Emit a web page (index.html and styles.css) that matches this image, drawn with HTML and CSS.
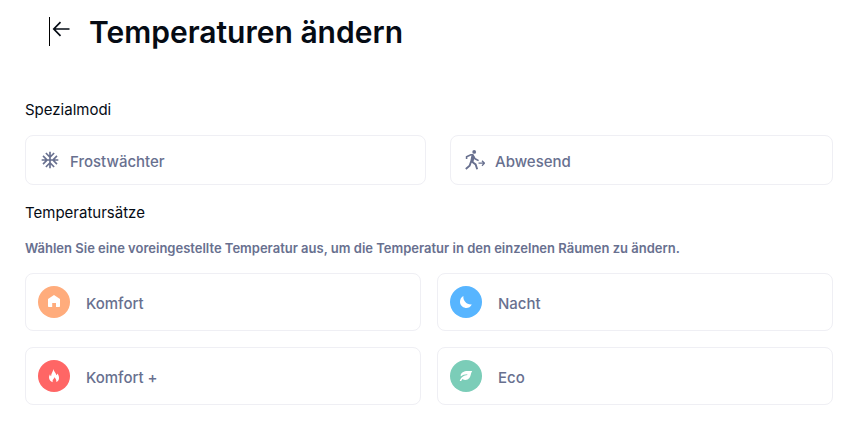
FILE: index.html
```html
<!DOCTYPE html>
<html lang="de">
<head>
  <meta charset="utf-8">
  <meta name="viewport" content="width=device-width, initial-scale=1">
  <title>Temperaturen ändern</title>
  <link rel="stylesheet" href="styles.css">
</head>
<body>
  <header class="page-header">
    <a class="back" href="#" aria-label="Zurück">
      <svg width="18" height="16" viewBox="0 0 18 16" fill="none" stroke="currentColor" stroke-width="1.7">
        <path d="M17.5 8H2M8.5 1.2 1.8 8l6.7 6.8"/>
      </svg>
    </a>
    <h1>Temperaturen ändern</h1>
  </header>

  <main>
    <h2>Spezialmodi</h2>
    <div class="modes">
      <button type="button" class="card mode">
        <svg width="20" height="20" viewBox="0 0 24 24" fill="currentColor">
          <path d="M22 11h-4.170l3.240-3.240-1.410-1.420L15 11h-2V9l4.660-4.660-1.420-1.410L13 6.170V2h-2v4.170L7.760 2.930 6.340 4.340 11 9v2H9L4.340 6.340 2.930 7.760 6.170 11H2v2h4.170l-3.240 3.240 1.410 1.420L9 13h2v2l-4.660 4.660 1.420 1.410L11 17.830V22h2v-4.170l3.240 3.240 1.420-1.410L13 15v-2h2l4.660 4.660 1.410-1.420L17.830 13H22z"/>
        </svg>
        <span class="label">Frostwächter</span>
      </button>
      <button type="button" class="card mode">
        <svg width="20" height="20" viewBox="0 0 20 20" fill="none" stroke="currentColor" stroke-width="1.6">
          <circle cx="9.2" cy="1.9" r="1.9" fill="currentColor" stroke="none"/>
          <path d="M1.600 9V6.800l4.200-2h2l2.300 4 3.500 1.800"/>
          <path d="M7.500 5 6.300 11.200l4.300 3.200 1.600 4.800M8.600 6.500l-1 5M6 11.800l-1.400 4L.8 19" stroke-width="1.900"/>
          <path d="M13.500 13.200h5.800M17 10.700l2.500 2.500-2.500 2.500" stroke-width="1.300"/>
        </svg>
        <span class="label">Abwesend</span>
      </button>
    </div>

    <h2>Temperatursätze</h2>
    <p class="hint">Wählen Sie eine voreingestellte Temperatur aus, um die Temperatur in den einzelnen Räumen zu ändern.</p>
    <div class="presets">
      <button type="button" class="card preset">
        <span class="badge comfort">
          <svg width="16" height="16" viewBox="0 0 16 16" fill="currentColor">
            <path d="M8 1 14 5v7.200q0 .8-.8.8H10V9H6.200v4H2.800Q2 13 2 12.200V5z"/>
          </svg>
        </span>
        <span class="label">Komfort</span>
      </button>
      <button type="button" class="card preset">
        <span class="badge night">
          <svg width="16" height="16" viewBox="0 0 16 16" fill="currentColor">
            <path d="M5.400 2C4.800 6.500 8.500 10.800 13.800 10.400 12.500 13 10 14.200 7.500 13.900 4.300 13.500 2 11 2 7.800 2 5.200 3.300 3 5.400 2z"/>
          </svg>
        </span>
        <span class="label">Nacht</span>
      </button>
      <button type="button" class="card preset">
        <span class="badge comfort-plus">
          <svg width="16" height="16" viewBox="0 0 16 16" fill="currentColor">
            <path d="M7.400 1c.3 2.300 2.800 4 3 6.300.6-.4.9-1 .9-1.700 1.200 1.400 1.900 3 1.700 4.800-.2 1.700-1.300 3-2.700 3.700.5-2-.7-3.400-1.900-4.800-.2 1.300-1.600 2-1.800 3.200-.1.700 0 1.200.2 1.700C4.600 13.500 3 11.900 3 9.600c0-1.500.6-2.400 1-3.300.2.900.5 1.500 1.100 1.900C5 5.400 7.300 3.700 7.400 1z"/>
          </svg>
        </span>
        <span class="label">Komfort +</span>
      </button>
      <button type="button" class="card preset">
        <span class="badge eco">
          <svg width="16" height="16" viewBox="0 0 16 16" fill="currentColor">
            <path d="M14.200 3C10.500 3.200 7.500 2.200 4.700 4.200 2.800 5.500 2.400 7 2.800 8.500 4.500 6.900 6.700 6.300 9.300 6.200v.7C6 7.200 2.800 9 1.700 13h1.500c.3-.9.7-1.600 1.200-2.100 2.300 1.700 5.300 1.100 7-1 1.500-1.800 1.200-4.600 2.800-6.900z"/>
          </svg>
        </span>
        <span class="label">Eco</span>
      </button>
    </div>
  </main>
</body>
</html>
```

FILE: styles.css
```css
* {
  box-sizing: border-box;
}
body {
  margin: 0;
  padding: 12px 30px 24px 25px;
  background: #fff;
  color: #050b14;
  font-family: Inter, "Open Sans", sans-serif;
}
svg {
  display: block;
  flex: none;
}
.page-header {
  display: flex;
  align-items: center;
  gap: 19px;
  height: 40px;
  padding-left: 24px;
}
.back {
  display: flex;
  align-items: center;
  height: 29px;
  margin-bottom: 2px;
  padding: 0 0 4px 2px;
  border-left: 1px solid #000;
  color: #050b14;
}
h1 {
  margin: 0;
  font-size: 30px;
  font-weight: 600;
  line-height: 40px;
}
main {
  padding-top: 48px;
}
h2 {
  margin: 0;
  font-size: 15px;
  font-weight: 400;
  line-height: 20px;
}
.hint {
  margin: 16px 0;
  color: #68708f;
  font-size: 13px;
  font-weight: 600;
  line-height: 18px;
}
.card {
  display: flex;
  align-items: center;
  border: 1px solid #efeff4;
  border-radius: 8px;
  background: #fff;
  color: #68708f;
  font: inherit;
  font-size: 15px;
  font-weight: 500;
  line-height: 20px;
  text-align: left;
  cursor: pointer;
}
.label {
  padding-top: 4px;
}
.modes {
  display: grid;
  grid-template-columns: 1.047fr 1fr;
  gap: 24px;
  margin: 15px 0 18px;
}
.mode {
  gap: 10px;
  height: 50px;
  padding: 0 14px;
}
.presets {
  display: grid;
  grid-template-columns: 1fr 1fr;
  gap: 16px;
}
.preset {
  gap: 16px;
  height: 58px;
  padding: 0 12px;
}
.badge {
  display: flex;
  align-items: center;
  justify-content: center;
  width: 32px;
  height: 32px;
  border-radius: 50%;
  color: #fff;
}
.comfort {
  background: #ffac7c;
}
.night {
  background: #57b5ff;
}
.comfort-plus {
  background: #ff6665;
}
.eco {
  background: #7bcdb8;
}
```
